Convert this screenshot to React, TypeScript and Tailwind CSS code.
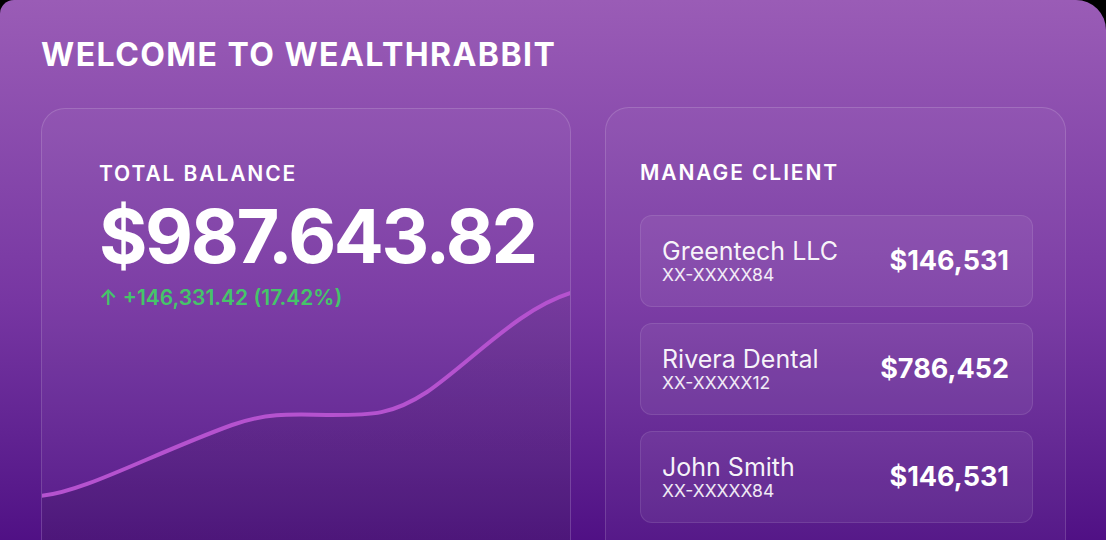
import React from "react";

const clients = [
  { name: "Greentech LLC", acct: "XX-XXXXX84", amount: "$146,531" },
  { name: "Rivera Dental", acct: "XX-XXXXX12", amount: "$786,452" },
  { name: "John Smith", acct: "XX-XXXXX84", amount: "$146,531" },
];

const curve =
  "M-2 387 C 40 384, 110 345, 190 316 C 225 304, 245 305, 290 306 C 330 306, 350 306, 385 283 C 430 252, 478 198, 532 183";

export default function App() {
  return (
    <div className="w-[1106px] h-[540px] overflow-hidden bg-black" style={{ fontFamily: "Inter, 'Noto Sans', sans-serif" }}>
      <div className="h-[580px] rounded-tl-[14px] rounded-tr-[30px] bg-gradient-to-b from-[#9a5cb6] via-[#7736a2] via-[52%] to-[#4a0680] px-[41px] pt-[38px] text-white">
        <h1 className="text-[32px] leading-[34px] font-bold tracking-[0.045em]">WELCOME TO WEALTHRABBIT</h1>
        <div className="mt-[36px] flex gap-[34px]">
          <div className="relative w-[530px] h-[480px] shrink-0 overflow-hidden rounded-[24px] border border-white/15 bg-white/[0.04]">
            <svg className="absolute left-0 top-0" width="530" height="480" viewBox="0 0 530 480">
              <defs>
                <linearGradient id="fillg" x1="0" y1="0" x2="0" y2="1">
                  <stop offset="0" stopColor="#000000" stopOpacity="0.05" />
                  <stop offset="1" stopColor="#000000" stopOpacity="0.12" />
                </linearGradient>
              </defs>
              <path d={curve + " L 532 480 L -2 480 Z"} fill="url(#fillg)" />
              <path d={curve} fill="none" stroke="#b552cf" strokeWidth="4" strokeLinecap="round" />
            </svg>
            <div className="relative pl-[57px] pt-[52px]">
              <div className="text-[21px] leading-[26px] font-semibold tracking-[0.09em]">TOTAL BALANCE</div>
              <div className="mt-[11px] text-[74px] leading-[76px] font-bold tracking-[-0.032em]">$987.643.82</div>
              <div className="mt-[11px] text-[21px] leading-[26px] font-semibold text-[#45c56a]">↑ +146,331.42 (17.42%)</div>
            </div>
          </div>
          <div className="w-[461px] h-[480px] -mt-px shrink-0 rounded-[24px] border border-white/15 bg-white/[0.04] pl-[34px] pr-[32px] pt-[52px]">
            <div className="text-[21px] leading-[26px] font-semibold tracking-[0.09em]">MANAGE CLIENT</div>
            <div className="mt-[29px] flex flex-col gap-[16px]">
              {clients.map((c, i) => (
                <div key={i} className="h-[92px] rounded-[12px] border border-white/10 bg-white/[0.06] flex items-center justify-between pl-[21px] pr-[23px]">
                  <div className="flex flex-col">
                    <span className="text-[25px] leading-[27px] font-normal text-white/95">{c.name}</span>
                    <span className="text-[17.5px] leading-[20px] font-normal text-white/90">{c.acct}</span>
                  </div>
                  <span className="text-[27px] leading-[30px] font-bold">{c.amount}</span>
                </div>
              ))}
            </div>
          </div>
        </div>
      </div>
    </div>
  );
}
